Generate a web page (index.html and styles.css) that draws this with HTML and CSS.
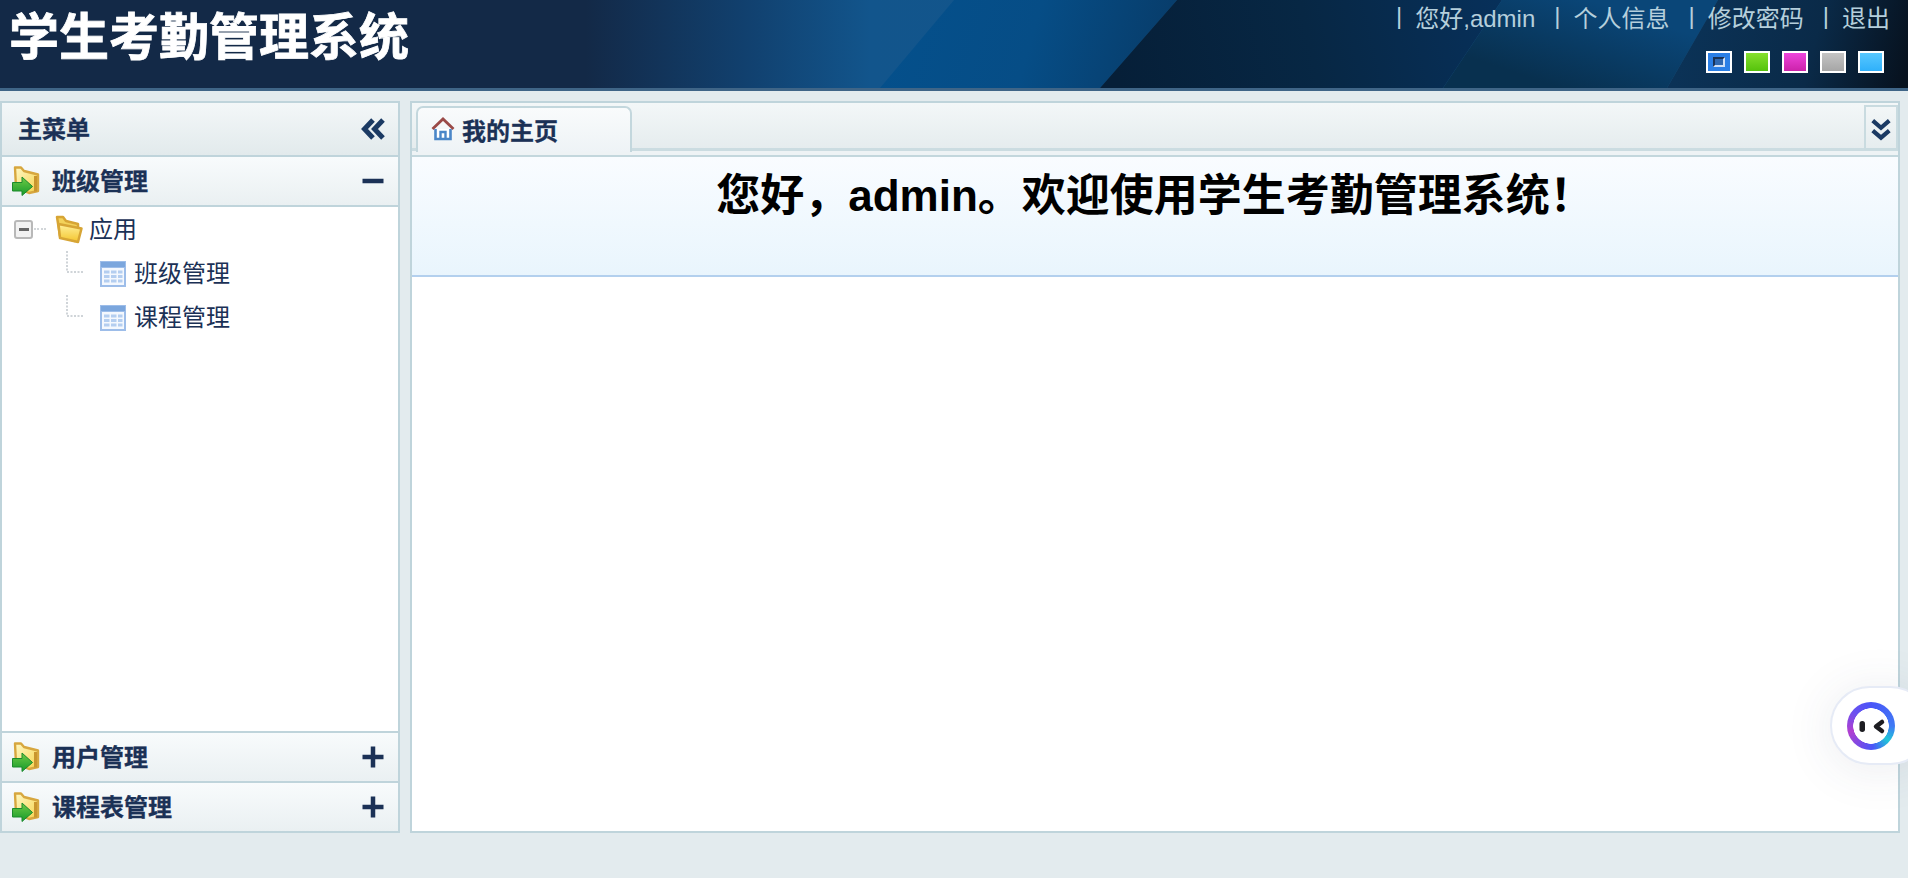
FILE: index.html
```html
<!DOCTYPE html>
<html lang="zh-CN">
<head>
<meta charset="utf-8">
<title>学生考勤管理系统</title>
<link rel="stylesheet" href="styles.css">
</head>
<body>
<svg class="defs" width="0" height="0" aria-hidden="true">
  <defs>
    <linearGradient id="fold" x1="0" y1="0" x2="1" y2="1"><stop offset="0" stop-color="#fff8c4"/><stop offset="1" stop-color="#f6d24c"/></linearGradient>
    <linearGradient id="fold2" x1="0" y1="0" x2="0" y2="1"><stop offset="0" stop-color="#fff09a"/><stop offset="1" stop-color="#f4c52e"/></linearGradient>
    <linearGradient id="arrow" x1="0" y1="0" x2="0" y2="1"><stop offset="0" stop-color="#6fcb45"/><stop offset="1" stop-color="#169a2c"/></linearGradient>
    <symbol id="i-acc" viewBox="0 0 28 30">
      <path d="M3 1.500H9L12 5 26 8.500V25L17 27 4 22Z" fill="url(#fold)" stroke="#d7a73f" stroke-width="2.400" stroke-linejoin="round"/>
      <path d="M23.500 10V25.500" stroke="#c9952e" stroke-width="3"/>
      <path d="M0.500 16.500H10V11L20.500 20.500 10 29.500V25H0.500Z" fill="url(#arrow)" stroke="#1b8a2c" stroke-width="1"/>
    </symbol>
    <symbol id="i-folder" viewBox="0 0 29 29">
      <path d="M2 2H8L11 6 23 9V20L20 26 5 21Z" fill="#f3d25a" stroke="#d7a535" stroke-width="2.500" stroke-linejoin="round"/>
      <path d="M3.500 9 26.500 13.500 23 27 5 23Z" fill="url(#fold2)" stroke="#d7a535" stroke-width="2.500" stroke-linejoin="round"/>
    </symbol>
    <symbol id="i-table" viewBox="0 0 26 26">
      <rect width="26" height="26" fill="#9dbde9"/>
      <rect x="1" y="1" width="24" height="5" fill="#7ba6dd"/>
      <rect x="2" y="7" width="22" height="17" fill="#f4f8fe"/>
      <path d="M4 9.500h5.500v3H4zm7 0h5.500v3H11zm7 0h4.500v3H18zM4 14h5.500v3H4zm7 0h5.500v3H11zm7 0h4.500v3H18zM4 18.500h5.500v3H4zm7 0h5.500v3H11zm7 0h4.500v3H18z" fill="#b4cef0"/>
    </symbol>
    <symbol id="i-branch" viewBox="0 0 24 24">
      <path d="M1 0v21h17" fill="none" stroke="#cfd4d8" stroke-width="2" stroke-dasharray="2 1.500"/>
    </symbol>
  </defs>
</svg>

<header class="top">
  <svg class="top-art" viewBox="0 0 1908 88" preserveAspectRatio="none" aria-hidden="true">
    <defs>
      <linearGradient id="g0" x1="0" y1="0" x2="1" y2="0">
        <stop offset="0" stop-color="#132947"/><stop offset=".307" stop-color="#132947"/><stop offset=".39" stop-color="#11406e"/><stop offset=".456" stop-color="#12558c"/><stop offset="1" stop-color="#1a5684"/>
      </linearGradient>
      <linearGradient id="g1" x1="880" y1="0" x2="1180" y2="88" gradientUnits="userSpaceOnUse">
        <stop offset="0" stop-color="#04508c"/><stop offset=".5" stop-color="#064d86"/><stop offset="1" stop-color="#083a66"/>
      </linearGradient>
      <linearGradient id="g2" x1="1120" y1="88" x2="1500" y2="0" gradientUnits="userSpaceOnUse">
        <stop offset="0" stop-color="#061f38"/><stop offset=".5" stop-color="#072744"/><stop offset="1" stop-color="#07305a"/>
      </linearGradient>
      <linearGradient id="g3" x1="1560" y1="88" x2="1590" y2="0" gradientUnits="userSpaceOnUse">
        <stop offset="0" stop-color="#08304f"/><stop offset="1" stop-color="#0a4678"/>
      </linearGradient>
      <linearGradient id="g4" x1="1680" y1="0" x2="1908" y2="60" gradientUnits="userSpaceOnUse">
        <stop offset="0" stop-color="#0b3358"/><stop offset=".6" stop-color="#0a2a48"/><stop offset="1" stop-color="#07121f"/>
      </linearGradient>
    </defs>
    <rect width="1908" height="88" fill="url(#g0)"/>
    <polygon points="954,0 1177,0 1100,88 880,88" fill="url(#g1)"/>
    <polygon points="1177,0 1502,0 1443,88 1100,88" fill="url(#g2)"/>
    <polygon points="1502,0 1718,0 1667,88 1443,88" fill="url(#g3)"/>
    <polygon points="1718,0 1908,0 1908,88 1667,88" fill="url(#g4)"/>
  </svg>
  <h1 class="brand">学生考勤管理系统</h1>
  <div class="top-right">
    <nav class="top-nav">
      <span class="sep">|</span><a class="top-link">您好,admin</a>
      <span class="sep">|</span><a class="top-link">个人信息</a>
      <span class="sep">|</span><a class="top-link">修改密码</a>
      <span class="sep">|</span><a class="top-link">退出</a>
    </nav>
    <div class="themes">
      <span class="swatch swatch-blue"><span class="swatch-mark"></span></span>
      <span class="swatch swatch-green"></span>
      <span class="swatch swatch-pink"></span>
      <span class="swatch swatch-gray"></span>
      <span class="swatch swatch-sky"></span>
    </div>
  </div>
</header>

<main class="main">
  <aside class="side">
    <div class="side-title">
      <span class="head-text">主菜单</span>
      <svg class="tool" viewBox="0 0 24 24" aria-hidden="true"><path d="M12 3 3.500 12 12 21M22 3l-8.500 9 8.500 9" fill="none" stroke="#1b3a63" stroke-width="5"/></svg>
    </div>
    <div class="acc-head">
      <svg class="acc-icon"><use href="#i-acc"/></svg>
      <span class="acc-name head-text">班级管理</span>
      <svg class="tool" viewBox="0 0 24 24" aria-hidden="true"><path d="M1.500 12h21" stroke="#1b3156" stroke-width="4.500"/></svg>
    </div>
    <div class="tree">
      <div class="tree-row">
        <span class="toggle"><span class="toggle-bar"></span></span>
        <span class="dots"></span>
        <svg class="tree-folder"><use href="#i-folder"/></svg>
        <span class="tree-text tree-root">应用</span>
      </div>
      <div class="tree-row tree-child">
        <svg class="branch"><use href="#i-branch"/></svg>
        <svg class="tree-table"><use href="#i-table"/></svg>
        <span class="tree-text">班级管理</span>
      </div>
      <div class="tree-row tree-child">
        <svg class="branch"><use href="#i-branch"/></svg>
        <svg class="tree-table"><use href="#i-table"/></svg>
        <span class="tree-text">课程管理</span>
      </div>
    </div>
    <div class="acc-head">
      <svg class="acc-icon"><use href="#i-acc"/></svg>
      <span class="acc-name head-text">用户管理</span>
      <svg class="tool" viewBox="0 0 24 24" aria-hidden="true"><path d="M1.500 12h21M12 1.500v21" stroke="#1b3156" stroke-width="4.500"/></svg>
    </div>
    <div class="acc-head acc-last">
      <svg class="acc-icon"><use href="#i-acc"/></svg>
      <span class="acc-name head-text">课程表管理</span>
      <svg class="tool" viewBox="0 0 24 24" aria-hidden="true"><path d="M1.500 12h21M12 1.500v21" stroke="#1b3156" stroke-width="4.500"/></svg>
    </div>
  </aside>

  <section class="content">
    <div class="tabs">
      <div class="tab">
        <svg class="home" viewBox="0 0 24 24" aria-hidden="true">
          <path d="M1.500 12 12 2l10.500 10" fill="none" stroke="#9a4a48" stroke-width="2.800"/>
          <path d="M4.500 12v10h15V12" fill="#fff" stroke="#4a86c8" stroke-width="2.600"/>
          <path d="M9.500 22v-7h5v7" fill="none" stroke="#4a86c8" stroke-width="2.400"/>
        </svg>
        <span class="head-text">我的主页</span>
      </div>
      <div class="tab-more">
        <svg viewBox="0 0 20 20" aria-hidden="true"><path d="M2.500 1.500 10 8l7.500-6.500M2.500 10.500 10 17l7.500-6.500" fill="none" stroke="#1b3a63" stroke-width="3.800"/></svg>
      </div>
    </div>
    <div class="welcome">
      <h2 class="welcome-text">您好，admin。欢迎使用学生考勤管理系统！</h2>
    </div>
  </section>
</main>

<div class="assistant">
  <div class="assistant-logo">
    <svg viewBox="0 0 48 48" aria-hidden="true">
      <rect x="12.500" y="19" width="5.500" height="11" rx="2.700" fill="#1d1d22"/>
      <path d="M35 20 29 24.500 35 29" fill="none" stroke="#1d1d22" stroke-width="4.500" stroke-linecap="round" stroke-linejoin="round"/>
    </svg>
  </div>
</div>
</body>
</html>
```

FILE: styles.css
```css
* { box-sizing: border-box; }
html, body { height: 100%; }
body {
  margin: 0;
  height: 100vh;
  overflow: hidden;
  display: flex;
  flex-direction: column;
  background: #e3ebee;
  font-family: "Liberation Sans", "Noto Sans CJK SC", sans-serif;
  color: #1b3156;
}
.defs { position: absolute; }

/* header */
.top {
  position: relative;
  flex: none;
  height: 91px;
  border-bottom: 3px solid #3f6587;
  display: flex;
  justify-content: space-between;
  overflow: hidden;
}
.top-art { position: absolute; inset: 0; width: 100%; height: 100%; }
.brand {
  position: relative;
  margin: 0;
  padding: 8px 0 0 9px;
  font-size: 50px;
  line-height: 60px;
  font-weight: 700;
  color: #fff;
  -webkit-text-stroke: .8px #fff;
}
.top-right {
  position: relative;
  display: flex;
  flex-direction: column;
  align-items: flex-end;
  padding: 0 18px 0 0;
}
.top-nav {
  display: flex;
  height: 36px;
  padding-bottom: 4px;
  align-items: center;
  font-size: 24px;
  color: #b5cfdc;
}
.sep { margin: 0 13px 0 19px; }
.themes { display: flex; gap: 12px; margin-top: 15px; margin-right: 6px; }
.swatch { width: 26px; height: 22px; border: 2px solid #fff; display: block; }
.swatch-blue { background: #2a7fe6; padding: 4px 5px; }
.swatch-mark { display: block; height: 100%; border: 2px solid #cfe0f6; border-top-color: #1a3357; border-left-color: #1a3357; background: #2f68b0; }
.swatch-green { background: linear-gradient(#86e02e, #55c20c); }
.swatch-pink { background: linear-gradient(#ee45dc, #cc22aa); }
.swatch-gray { background: linear-gradient(#c4c4c4, #a6a6a6); }
.swatch-sky { background: linear-gradient(#58c8ff, #2fb0fa); }

/* layout */
.main {
  flex: 1;
  min-height: 0;
  display: flex;
  gap: 10px;
  padding: 10px 8px 45px 0;
}

/* side */
.side {
  flex: none;
  width: 400px;
  border: 2px solid #bfd4db;
  display: flex;
  flex-direction: column;
  background: #fff;
}
.head-text { -webkit-text-stroke: .3px #1b3156; }
.side-title {
  flex: none;
  height: 54px;
  padding: 0 13px 4px 16px;
  display: flex;
  align-items: center;
  justify-content: space-between;
  font-size: 24px;
  font-weight: 700;
  background: linear-gradient(#f3f7f8, #e2eaec);
  border-bottom: 2px solid #bfd4db;
}
.tool { width: 24px; height: 24px; flex: none; }
.side-title .tool { margin-bottom: -3px; }
.acc-head {
  flex: none;
  height: 50px;
  padding: 0 13px 0 10px;
  display: flex;
  align-items: center;
  font-size: 24px;
  font-weight: 700;
  background: linear-gradient(#f8fbfc, #eaf0f2);
  border-bottom: 2px solid #bfd4db;
}
.acc-last { border-bottom: 0; height: 48px; }
.acc-icon { width: 28px; height: 30px; flex: none; }
.acc-name { flex: 1; margin: 0 0 4px 12px; }

.tree { flex: 1; min-height: 0; border-bottom: 2px solid #bfd4db; }
.tree-row {
  display: flex;
  align-items: center;
  height: 44px;
  padding-left: 12px;
  font-size: 24px;
}
.tree-root { margin-bottom: 3px; }
.toggle {
  flex: none;
  width: 19px;
  height: 19px;
  border: 2.500px solid #b8b8b8;
  border-radius: 3px;
  background: #f2f2f2;
  display: flex;
  align-items: center;
  justify-content: center;
}
.toggle-bar { width: 10px; height: 3px; background: #666; }
.dots { flex: none; width: 12px; margin-left: 1px; border-top: 2px dotted #d2d6d9; }
.tree-folder { flex: none; width: 29px; height: 29px; margin-left: 9px; margin-right: 5px; }
.tree-child { padding-left: 64px; align-items: flex-start; }
.branch { flex: none; width: 24px; height: 24px; }
.tree-table { flex: none; width: 26px; height: 26px; margin: 10px 0 0 10px; }
.tree-child .tree-text { margin: 6px 0 0 8px; line-height: 34px; }

/* content */
.content {
  flex: 1;
  min-width: 0;
  border: 2px solid #bfd4db;
  display: flex;
  flex-direction: column;
  background: #fff;
}
.tabs {
  flex: none;
  position: relative;
  height: 54px;
  padding: 3px 0 0 4px;
  display: flex;
  justify-content: space-between;
  align-items: flex-start;
  background: linear-gradient(#f3f7f8 0, #e5ecee 46px, #eef3f5 46px, #eef3f5 100%);
  border-bottom: 2px solid #c3d7dd;
}
.tabs::before {
  content: "";
  position: absolute;
  left: 0; right: 0; top: 45px;
  height: 3px;
  background: #cbdce1;
}
.tab {
  position: relative;
  width: 216px;
  height: 46px;
  padding: 0 0 2px 13px;
  display: flex;
  align-items: center;
  gap: 7px;
  font-size: 24px;
  font-weight: 700;
  background: linear-gradient(#f9fbfc, #eef3f6);
  border: 2px solid #c3d7dd;
  border-bottom: 0;
  border-radius: 7px 7px 0 0;
}
.home { width: 24px; height: 24px; flex: none; }
.tab-more {
  position: relative;
  width: 34px;
  height: 45px;
  margin-top: -1px;
  padding-top: 4px;
  background: linear-gradient(#f2f6f7, #e6edef);
  border: 2px solid #c9dbe0;
  display: flex;
  align-items: center;
  justify-content: center;
}
.tab-more svg { width: 22px; height: 22px; }
.welcome {
  flex: none;
  height: 120px;
  background: linear-gradient(#f9fcff, #e9f5fd);
  border-bottom: 2px solid #b3d0ee;
  text-align: center;
}
.welcome-text {
  margin: 0;
  padding-top: 11px;
  font-size: 44px;
  line-height: 56px;
  font-weight: 700;
  color: #000;
}

/* assistant */
.assistant {
  position: absolute;
  left: 1830px;
  top: 686px;
  width: 100px;
  height: 79px;
  background: #fff;
  border: 2px solid #e6ebf6;
  border-radius: 40px;
  box-shadow: 0 4px 50px rgba(60, 70, 100, .1);
  padding: 14px 0 0 15px;
}
.assistant-logo {
  width: 48px;
  height: 48px;
  border-radius: 50%;
  background:
    radial-gradient(circle, #fff 17.500px, transparent 18px),
    conic-gradient(#4a55f8 0deg, #3f7af5 90deg, #1fc6d8 130deg, #4a55f8 175deg, #b13fd0 255deg, #6a50f0 310deg, #4a55f8 360deg);
}
.assistant-logo svg { display: block; width: 48px; height: 48px; }
```
